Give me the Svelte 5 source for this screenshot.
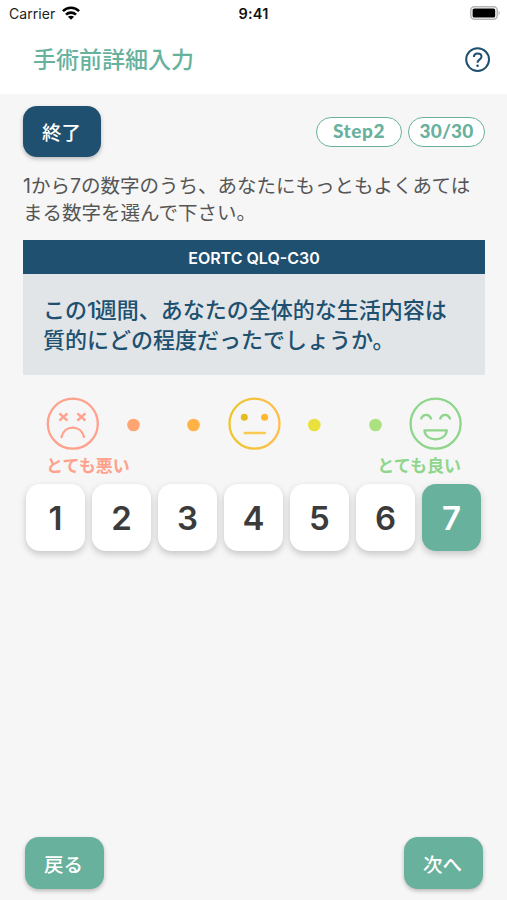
<script>
    const scores = [1, 2, 3, 4, 5, 6, 7];
    let selected = 7; // Currently chosen score

    const selectScore = (score) => {
        selected = score;
    };
</script>

<div class="screen">
    <!-- Status bar -->
    <div class="status-bar">
        <div class="carrier">
            <span>Carrier</span>
            <svg class="wifi" viewBox="0 0 18 14" width="18" height="14">
                <g fill="none" stroke="#000" stroke-width="2.6">
                    <path d="M0.9 5.2C5.4 0.6 12.6 0.6 17.1 5.2" />
                    <path d="M4 8.6C6.8 5.9 11.2 5.9 14 8.6" />
                </g>
                <path d="M9 13.8L5.9 10.8C7.6 9.3 10.4 9.3 12.1 10.8Z" />
            </svg>
        </div>
        <div class="time">9:41</div>
        <svg class="battery" viewBox="0 0 31 14" width="31" height="14">
            <rect x="0.8" y="0.8" width="26.4" height="12.4" rx="3.5" fill="#fff" stroke="#b5b5b5" stroke-width="1.5" />
            <rect x="2.6" y="2.4" width="22.6" height="9.2" rx="1.6" />
            <path d="M28.6 4.8Q30.8 7 28.6 9.2Z" fill="#aaa" />
        </svg>
    </div>

    <header>
        <h1>手術前詳細入力</h1>
        <button class="help" aria-label="ヘルプ">
            <svg viewBox="0 0 26 26" width="26" height="26" fill="none" stroke="#20506f">
                <circle cx="12.6" cy="12.6" r="11.4" stroke-width="2" />
                <path d="M8.9 10.1C8.9 7.8 10.4 6.5 12.6 6.5C14.9 6.5 16.5 7.8 16.5 9.7C16.5 12.3 12.6 12.5 12.6 15.8" stroke-width="2" />
                <circle cx="12.6" cy="18.7" r="1.3" fill="#20506f" stroke="none" />
            </svg>
        </button>
    </header>

    <main>
        <div class="toolbar">
            <button class="action quit">終了</button>
            <div class="pills">
                <span class="pill step">Step2</span>
                <span class="pill count">30/30</span>
            </div>
        </div>

        <p class="instruction">1から7の数字のうち、あなたにもっともよくあては<br />まる数字を選んで下さい。</p>

        <section>
            <h2>EORTC QLQ-C30</h2>
            <p class="question">この<span class="one">1</span>週間、あなたの全体的な生活内容は<br />質的にどの程度だったでしょうか。</p>
        </section>

        <!-- Faces from worst to best -->
        <svg class="faces" viewBox="0 0 462 54" width="462" height="54" fill="none" stroke-width="2.3" stroke-linecap="round">
            <defs>
                <linearGradient id="middle" x1="0" x2="1">
                    <stop offset="0" stop-color="#edc62e" />
                    <stop offset="1" stop-color="#ffbd4c" />
                </linearGradient>
            </defs>
            <g stroke="#ffa18c">
                <circle cx="49.8" cy="26.7" r="25" />
                <path d="M36.4 16.3l8 7.4m0-7.4l-8 7.4M54.4 16.3l8 7.4m0-7.4l-8 7.4" stroke-linecap="butt" stroke-width="2.4" />
                <path d="M38.5 40C41.5 27.5 58 27.5 61 40" />
            </g>
            <circle cx="110.5" cy="28" r="6.3" fill="#ffa572" />
            <circle cx="170.5" cy="28" r="6.3" fill="#ffb347" />
            <circle cx="231.5" cy="26.7" r="25" stroke="url(#middle)" />
            <circle cx="221.3" cy="20.2" r="3.5" fill="#e5bd22" />
            <circle cx="241.6" cy="20.2" r="3.5" fill="#ffb82e" />
            <path d="M221.8 36h20" stroke="#fcca52" stroke-width="2.6" />
            <circle cx="291.3" cy="28" r="6.3" fill="#e9df3d" />
            <circle cx="352.5" cy="28" r="6.3" fill="#ace17f" />
            <g stroke="#8fd68c">
                <circle cx="412.6" cy="26.7" r="25" />
                <path d="M398.2 21.5C400.2 16.6 406 16.6 408 21.5M417.2 21.5C419.2 16.6 425 16.6 427 21.5" />
                <path d="M401.4 33.3h22.4C422.6 45.4 402.6 45.4 401.4 33.3z" stroke-linejoin="round" />
            </g>
        </svg>
        <div class="captions">
            <span class="bad">とても悪い</span>
            <span class="good">とても良い</span>
        </div>

        <div class="scores">
            {#each scores as score}
                <button class="score" class:selected={selected === score} on:click={() => selectScore(score)}>{score}</button>
            {/each}
        </div>

        <footer>
            <button class="action">戻る</button>
            <button class="action">次へ</button>
        </footer>
    </main>
</div>

<style>
    :global(body) {
        margin: 0;
    }

    .screen {
        display: flex;
        flex-direction: column;
        width: 507px;
        height: 900px;
        overflow: hidden;
        background-color: #f6f6f6;
        font-family: Inter, "Noto Sans CJK JP", sans-serif;
    }

    h1, h2, p {
        margin: 0;
    }

    button {
        padding: 0;
        border: none;
        font-family: inherit;
        cursor: pointer;
    }

    .status-bar {
        display: grid;
        grid-template-columns: 1fr auto 1fr;
        align-items: center;
        height: 28px;
        padding: 0 6px 0 9px;
        background-color: #fff;
        color: #222;
        font-size: 14px;
    }

    .carrier {
        display: flex;
        align-items: center;
        gap: 7px;
        margin-top: -1px;
        letter-spacing: 0.05px;
    }

    .wifi {
        margin-top: -1px;
    }

    .time {
        margin-top: -1px;
        padding-right: 3px;
        color: #111;
        font-size: 14.5px;
        font-weight: 600;
        letter-spacing: 0.2px;
    }

    .battery {
        justify-self: end;
        margin-top: -2px;
    }

    header {
        display: flex;
        align-items: center;
        justify-content: space-between;
        box-sizing: border-box;
        height: 66px;
        padding: 0 16px 3px 33px;
        background-color: #fff;
    }

    h1 {
        padding-top: 1px;
        color: #68b19d;
        font-size: 23px;
        font-weight: 500;
        line-height: 32px;
    }

    .help {
        width: 26px;
        height: 26px;
        background: none;
    }

    main {
        display: flex;
        flex: 1;
        flex-direction: column;
        padding: 12px 22px 11px 23px;
    }

    .toolbar {
        display: flex;
        align-items: center;
        justify-content: space-between;
        height: 51px;
    }

    .action {
        width: 79px;
        height: 52px;
        padding-right: 2px;
        border-radius: 14px;
        background-color: #68b19d;
        color: #fff;
        font-size: 19.5px;
        font-weight: 500;
        box-shadow: 0 2px 4px rgba(0, 0, 0, 0.25);
    }

    .quit {
        width: 78px;
        height: 51px;
        padding-right: 1px;
        background-color: #20506f;
    }

    .pills {
        display: flex;
        gap: 6px;
    }

    .pill {
        box-sizing: border-box;
        height: 30px;
        border: 1.5px solid #68b19d;
        border-radius: 15px;
        background-color: #fff;
        color: #68b19d;
        font-family: Lato, sans-serif;
        font-size: 19px;
        font-weight: 900;
        line-height: 26px;
        text-align: center;
    }

    .step {
        width: 86px;
        letter-spacing: 0.6px;
    }

    .count {
        width: 77px;
        letter-spacing: 0.2px;
    }

    .instruction {
        margin-top: 16px;
        color: #555;
        font-size: 19.5px;
        font-weight: 400;
        line-height: 27px;
        white-space: nowrap;
    }

    section {
        margin-top: 13px;
        background-color: #e1e5e8;
    }

    h2 {
        height: 34px;
        background-color: #20506f;
        color: #fff;
        font-size: 16px;
        font-weight: 600;
        line-height: 37px;
        text-align: center;
    }

    .question {
        height: 80px;
        padding: 21px 0 0 20px;
        color: #20506f;
        font-size: 22px;
        font-weight: 500;
        line-height: 30px;
        white-space: nowrap;
    }

    .one {
        letter-spacing: -1.5px;
    }

    .faces {
        display: block;
        margin-top: 22px;
    }

    .captions {
        display: flex;
        justify-content: space-between;
        padding: 3px 24px 0 23px;
        font-size: 17px;
        font-weight: 700;
        line-height: 25px;
    }

    .bad {
        color: #ffa18c;
    }

    .good {
        color: #8fd68c;
    }

    .scores {
        display: flex;
        justify-content: space-between;
        margin-top: 5px;
        padding: 0 4px 0 3px;
    }

    .score {
        width: 59px;
        height: 67px;
        border-radius: 14px;
        background-color: #fff;
        color: #3b3b3b;
        font-size: 33px;
        font-weight: 600;
        box-shadow: 0 3px 7px rgba(0, 0, 0, 0.2);
    }

    .score.selected {
        background-color: #68b19d;
        color: #fff;
    }

    footer {
        display: flex;
        justify-content: space-between;
        margin-top: auto;
        padding: 0 2px;
    }
</style>
